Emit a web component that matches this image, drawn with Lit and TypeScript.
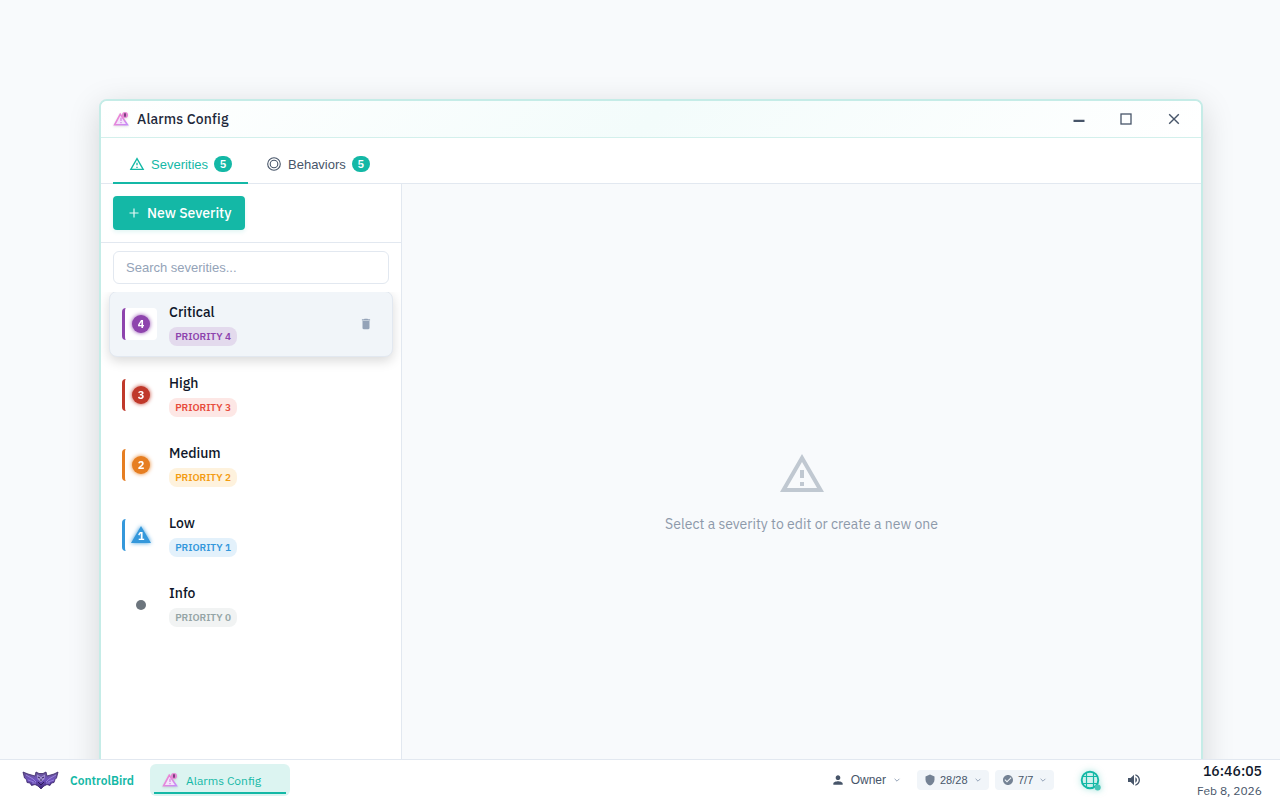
import { LitElement, html, css, svg } from "lit";
import { customElement } from "lit/decorators.js";
import { classMap } from "lit/directives/class-map.js";

interface Severity {
  name: string;
  level: number;
  shape: "circle" | "triangle" | "dot";
  kind: string;
}

const severities: Severity[] = [
  { name: "Critical", level: 4, shape: "circle", kind: "critical" },
  { name: "High", level: 3, shape: "circle", kind: "high" },
  { name: "Medium", level: 2, shape: "circle", kind: "medium" },
  { name: "Low", level: 1, shape: "triangle", kind: "low" },
  { name: "Info", level: 0, shape: "dot", kind: "info" },
];

const WARN = "M12 5.99L19.53 19H4.47L12 5.99M12 2L1 21h22L12 2zm1 14h-2v2h2v-2zm0-6h-2v4h2v-4z";
const icon = (d: string, size: number) =>
  html`<svg width=${size} height=${size} viewBox="0 0 24 24" fill="currentColor"><path d=${d}></path></svg>`;

const chevron = html`<svg class="chev" width="8" height="8" viewBox="0 0 8 8" fill="none" stroke="currentColor" stroke-width="1"><path d="M1.6 2.8L4 5.2L6.4 2.8"></path></svg>`;

const alarmIcon = html`<svg class="alarm" width="16" height="16" viewBox="0 0 16 16">
  <defs><linearGradient id="g" x1="0" y1="0" x2="1" y2="1"><stop offset="0" stop-color="#f07fd0"></stop><stop offset=".5" stop-color="#e487dc"></stop><stop offset="1" stop-color="#c58cfa"></stop></linearGradient></defs>
  <path d="M7.3 3.2L1.6 13.8H14.4Z" fill="#f3e3fb" stroke="url(#g)" stroke-width="1.6"></path>
  <path d="M8 6.8V10M8 11V12.3" stroke="#d58ae4" stroke-width="1.3"></path>
  <circle cx="12" cy="4" r="3" fill="#e784d4"></circle>
  <rect x="11" y="2.3" width="2" height="3.4" fill="#79437f"></rect>
</svg>`;

const bird = html`<svg width="38" height="20" viewBox="0 0 38 20">
  <defs><linearGradient id="b" x1="0" y1="0" x2="0" y2="1"><stop offset="0" stop-color="#66548f"></stop><stop offset=".45" stop-color="#7255c0"></stop><stop offset="1" stop-color="#3b2375"></stop></linearGradient></defs>
  <path d="M1 2L6 4L13 6L14 2L17 3.5H21L24 2L25 6L32 4L36 2L34.500 8L33 9.5L32 12.5L29.500 13L28 15.5L25 14.5L22 16L19 19L16 16L13 14.5L9.5 15.5L8 13L5 12.5L4.5 9.5L2.5 8Z" fill="url(#b)" stroke="#3a2668" stroke-width=".8"></path>
  <path d="M4 5L11 9L14 12M34 5L27 9L24 12M6 10L12 12M32 10L26 12M10 13L14 13M28 13L24 13" stroke="#9c86e0" stroke-width=".9" fill="none"></path>
  <path d="M15 4.5L19 7L23 4.5L22.5 9L19 12L15.5 9Z" fill="#a696d5"></path>
  <path d="M16 7L18.2 8.2M22 7L19.8 8.2M19 9V11M16 12L19 15L22 12" stroke="#2d1a5a" stroke-width="1" fill="none"></path>
</svg>`;

@customElement("app-root")
export class AppRoot extends LitElement {
  static styles = css`
    :host { display: block; width: 1280px; height: 800px; font-family: "IBM Plex Sans", Roboto, sans-serif; color: #1e293b; }
    * { box-sizing: border-box; }
    svg { display: block; flex: none; }
    span { white-space: nowrap; }
    .desktop { position: relative; height: 800px; overflow: hidden; background: #f8fafc; display: flex; flex-direction: column; justify-content: flex-end; }
    .window { position: absolute; left: 99px; top: 99px; width: 1104px; height: 702px; border: 2px solid #c5ece7; border-radius: 8px; background: #fff; box-shadow: 0 8px 32px rgba(0,0,0,.15); display: flex; flex-direction: column; overflow: hidden; }
    .titlebar { height: 37px; flex: none; display: flex; align-items: center; padding: 0 20px 0 12px; border-bottom: 1px solid #d3f0ec; background: linear-gradient(135deg, #fff 0%, #f3fcfb 50%, #fff 100%); }
    .alarm { filter: drop-shadow(0 1px 1px rgba(0,0,0,.12)); }
    .title { font-size: 14px; font-weight: 500; margin-left: 8px; letter-spacing: .14px; flex: 1; color: #1e293b; }
    .controls { display: flex; gap: 34px; color: #475569; }
    .controls svg:nth-child(2) { margin: 0 0 0 -1px; }
    .tabs { height: 46px; flex: none; display: flex; align-items: flex-end; padding-left: 12px; border-bottom: 1px solid #e2e8f0; }
    .tab { height: 38px; display: flex; align-items: center; padding: 0 16px; margin-bottom: -1px; font: 13px "Liberation Sans", sans-serif; color: #475569; border-bottom: 2px solid transparent; }
    .tab.active { color: #14b8a6; border-color: #14b8a6; width: 135px; margin-right: 2px; }
    .tab .label { margin: 0 6px 0 6px; }
    .count { font: 600 11px "IBM Plex Sans", "Open Sans", sans-serif; color: #fff; background: #14b8a6; height: 16px; width: 18px; border-radius: 8px; display: grid; place-items: center; }
    .body { flex: 1; display: flex; min-height: 0; }
    .side { width: 301px; border-right: 1px solid #e2e8f0; display: flex; flex-direction: column; }
    .bar { height: 59px; border-bottom: 1px solid #e2e8f0; padding: 12px; }
    .new { width: 132px; height: 34px; border-radius: 4px; background: #14b8a6; color: #fff; display: flex; align-items: center; padding-left: 16px; font-size: 14px; font-weight: 500; box-shadow: 0 2px 4px rgba(20,184,166,.12); }
    .new span { margin-left: 8px; }
    .search { height: 33px; margin: 8px 12px; border: 1px solid #e2e8f0; border-radius: 6px; display: flex; align-items: center; padding-left: 12px; color: #94a3b8; font: 13px "Liberation Sans", sans-serif; }
    .list { flex: 1; padding: 0 8px; display: flex; flex-direction: column; gap: 4px; overflow: hidden; }
    .item { height: 66px; flex: none; display: flex; align-items: center; padding: 0 19px 0 12px; border: 1px solid transparent; border-radius: 8px; }
    .item.hover { background: #f1f5f9; border-color: #e2e8f0; margin-top: -1px; margin-bottom: 1px; box-shadow: 0 4px 12px rgba(0,0,0,.15); }
    .mark { width: 35px; height: 32px; border-left: 3px solid var(--c); border-radius: 4px; display: grid; place-items: center; background: #fff; }
    .info .mark { border-color: transparent; }
    .text { flex: 1; margin-left: 12px; display: flex; flex-direction: column; align-items: flex-start; gap: 6px; padding-top: 1px; }
    .name { font-size: 14px; line-height: 18px; font-weight: 500; color: #0f172a; }
    .pill { height: 19px; width: 68px; border-radius: 8px; display: grid; place-items: center; font: 600 10px "IBM Plex Sans", "Noto Sans", sans-serif; color: var(--p); background: var(--t); }
    .critical { --c: #8e44ad; --p: #8e44ad; --t: #e3daed; }
    .high { --c: #c0392b; --p: #e74c3c; --t: #fde7e5; }
    .medium { --c: #e67e22; --p: #f39c12; --t: #fef2dd; }
    .low { --c: #3498db; --p: #3498db; --t: #e3f1fb; }
    .info { --c: #6c757d; --p: #95a5a6; --t: #f1f3f3; }
    .glow { overflow: visible; filter: drop-shadow(0 0 2px var(--c)); }
    .glow text { font: 700 11px "IBM Plex Sans", "Open Sans", sans-serif; fill: #fff; text-anchor: middle; }
    .trash { color: #94a3b8; }
    .empty { flex: 1; background: #f8fafc; display: flex; flex-direction: column; align-items: center; padding-top: 266px; gap: 17px; color: #8d99aa; }
    .empty svg { color: #c0c8d1; }
    .empty span { font-size: 14px; line-height: 18px; }
    .taskbar { position: relative; height: 41px; border-top: 1px solid #e2e8f0; background: #fff; display: flex; align-items: center; padding: 0 18px 0 22px; }
    .brand { margin-left: 10px; font-size: 12px; font-weight: 600; color: #14b8a6; width: 80px; }
    .task { width: 140px; height: 32px; border-radius: 6px; display: flex; align-items: center; padding: 0 0 0 12px; color: #14b8a6; font-size: 12px; background: linear-gradient(#14b8a6, #14b8a6) center bottom 2px / 132px 2px no-repeat, #dcf4f1; }
    .task span { margin-left: 8px; padding-top: 1px; }
    .fill { flex: 1; }
    .owner { display: flex; align-items: center; color: #475569; font: 12px "Liberation Sans", sans-serif; margin-right: 16px; }
    .owner span { margin: 0 7px 0 5px; }
    .owner > svg:first-child { margin-right: 1px; }
    .chev { color: #94a3b8; }
    .chip { height: 20px; border-radius: 4px; background: #f1f5f9; display: flex; align-items: center; padding: 0 7px; font: 11px "Liberation Sans", sans-serif; color: #475569; margin-right: 6px; }
    .chip span { margin-left: 4px; flex: 1; }
    .chip svg:first-child { color: #748294; }
    .chip.a { width: 72px; }
    .chip.b { width: 59px; margin-right: 26px; }
    .globe { filter: drop-shadow(0 0 3px rgba(20,184,166,.5)); }
    .sound { color: #475569; margin-left: 24px; }
    .clock { width: 120px; display: flex; flex-direction: column; align-items: flex-end; gap: 4px; padding-top: 2px; }
    .time { font-size: 14px; line-height: 16px; font-weight: 500; color: #0f172a; }
    .date { font-size: 12px; line-height: 16px; color: #475569; }
  `;

  mark(s: Severity) {
    if (s.shape === "dot")
      return html`<svg width="20" height="20" viewBox="0 0 20 20"><circle cx="10" cy="10" r="5" fill="#6c757d"></circle></svg>`;
    return html`<svg class="glow" width="20" height="20" viewBox="0 0 20 20">
      ${s.shape === "circle" ? svg`<circle cx="10" cy="10" r="9" fill="var(--c)"></circle>` : svg`<path d="M10 1L20 18H0Z" fill="var(--c)"></path>`}
      <text x="10" y=${s.shape === "circle" ? 14 : 15}>${s.level}</text>
    </svg>`;
  }

  render() {
    return html`<div class="desktop">
      <section class="window">
        <header class="titlebar">
          ${alarmIcon}<span class="title">Alarms Config</span>
          <div class="controls">
            <svg width="14" height="14" viewBox="0 0 14 14"><path d="M1.5 8.9H12.5" stroke="currentColor" stroke-width="2.4"></path></svg>
            <svg width="14" height="14" viewBox="0 0 14 14" fill="none" stroke="currentColor" stroke-width="1.3"><rect x="2" y="2" width="10" height="10"></rect></svg>
            <svg width="14" height="14" viewBox="0 0 14 14" fill="none" stroke="currentColor" stroke-width="1.4"><path d="M2.2 2.2L11.8 11.8M11.8 2.2L2.2 11.8"></path></svg>
          </div>
        </header>
        <nav class="tabs">
          <div class="tab active">${icon(WARN, 16)}<span class="label">Severities</span><span class="count">5</span></div>
          <div class="tab">
            <svg width="16" height="16" viewBox="0 0 16 16" fill="none" stroke="currentColor" stroke-width="1.1"><circle cx="8" cy="8" r="6.3"></circle><circle cx="8" cy="8" r="3.8"></circle></svg>
            <span class="label">Behaviors</span><span class="count">5</span>
          </div>
        </nav>
        <div class="body">
          <aside class="side">
            <div class="bar"><div class="new">
              <svg width="10" height="10" viewBox="0 0 10 10" stroke="#e8f9f7" stroke-width="1.2"><path d="M5 .5V9.5M.5 5H9.5"></path></svg><span>New Severity</span></div></div>
            <div class="search"><span>Search severities...</span></div>
            <div class="list">
              ${severities.map((s, i) => html`<div class=${classMap({ item: true, hover: i === 0, [s.kind]: true })}>
                <div class="mark">${this.mark(s)}</div>
                <div class="text"><span class="name">${s.name}</span><span class="pill">PRIORITY ${s.level}</span></div>
                ${i === 0 ? html`<span class="trash">${icon("M6 19c0 1.1.9 2 2 2h8c1.1 0 2-.9 2-2V7H6v12zM19 4h-3.500l-1-1h-5l-1 1H5v2h14V4z", 14)}</span>` : ""}
              </div>`)}
            </div>
          </aside>
          <main class="empty">${icon(WARN, 48)}<span>Select a severity to edit or create a new one</span></main>
        </div>
      </section>
      <footer class="taskbar">
        ${bird}<span class="brand">ControlBird</span>
        <div class="task">${alarmIcon}<span>Alarms Config</span></div>
        <div class="fill"></div>
        <div class="owner">${icon("M12 12c2.210 0 4-1.790 4-4s-1.790-4-4-4-4 1.790-4 4 1.790 4 4 4zm0 2c-2.670 0-8 1.340-8 4v2h16v-2c0-2.660-5.330-4-8-4z", 14)}<span>Owner</span>${chevron}</div>
        <div class="chip a">${icon("M12 1L3 5v6c0 5.550 3.840 10.740 9 12 5.160-1.260 9-6.450 9-12V5l-9-4z", 12)}<span>28/28</span>${chevron}</div>
        <div class="chip b">${icon("M12 2C6.480 2 2 6.480 2 12s4.480 10 10 10 10-4.480 10-10S17.520 2 12 2zm-2 15l-5-5 1.410-1.410L10 14.170l7.590-7.590L19 8l-9 9z", 12)}<span>7/7</span>${chevron}</div>
        <svg class="globe" width="22" height="22" viewBox="0 0 22 22" fill="none" stroke="#14b8a6">
          <circle cx="10" cy="11" r="8.300" stroke-width="1.900"></circle><path d="M2 7.500H18M2 14.500H18M6.500 3.500V18.500M13.500 3.500V18.500" stroke-width="1.200"></path><circle cx="17.700" cy="18.500" r="3" fill="#45c5b6" stroke="none"></circle></svg>
        <div class="sound">${icon("M3 9v6h4l5 5V4L7 9H3zm13.500 3c0-1.770-1.020-3.290-2.500-4.030v8.050c1.480-.73 2.500-2.250 2.500-4.020zM14 3.230v2.060c2.890.86 5 3.540 5 6.710s-2.110 5.850-5 6.710v2.060c4.010-.91 7-4.490 7-8.770s-2.990-7.860-7-8.770z", 16)}</div>
        <div class="clock"><span class="time">16:46:05</span><span class="date">Feb 8, 2026</span></div>
      </footer>
    </div>`;
  }
}
